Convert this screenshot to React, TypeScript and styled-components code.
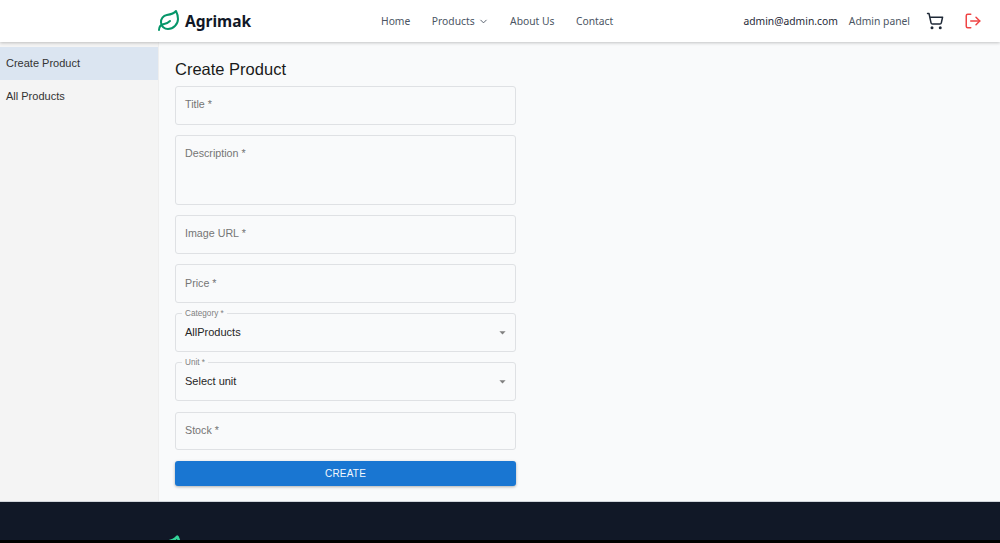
import React from "react";
import styled, { createGlobalStyle } from "styled-components";
import { ChevronDown, Leaf, LogOut, ShoppingCart } from "lucide-react";

const Global = createGlobalStyle`
  html, body {
    margin: 0;
    padding: 0;
    background: #000;
  }
  * {
    box-sizing: border-box;
  }
`;

const Page = styled.div`
  height: 543px;
  overflow: hidden;
  display: flex;
  flex-direction: column;
  background: #000;
  font-family: "Liberation Sans", Arial, sans-serif;
`;

const Header = styled.header`
  position: relative;
  z-index: 2;
  flex: none;
  height: 42px;
  background: #fff;
  box-shadow: 0 1px 3px rgba(0, 0, 0, 0.22);
  padding: 0 18px 0 157px;
  display: flex;
  align-items: center;
  font-family: "Noto Sans", "Open Sans", sans-serif;
  font-size: 10.3px;
`;

const Logo = styled.a`
  display: flex;
  align-items: center;
  gap: 4px;
  width: 224px;
  color: #111827;
  font-size: 15.5px;
  font-weight: 700;
`;

const Nav = styled.nav`
  display: flex;
  align-items: center;
  gap: 21.5px;
  color: #4b5563;
`;

const NavItem = styled.a`
  display: flex;
  align-items: center;
  gap: 3px;
`;

const Right = styled.div`
  margin-left: auto;
  display: flex;
  align-items: center;
`;

const Email = styled.span`
  color: #1f2937;
  margin-right: 11px;
`;

const PanelLink = styled.a`
  color: #4b5563;
  margin-right: 16px;
`;

const CartIcon = styled(ShoppingCart)`
  color: #1f2937;
  margin-right: 20px;
`;

const Body = styled.div`
  flex: none;
  height: 459.5px;
  display: flex;
  background: #f9fafb;
  border-bottom: 1px solid #d1d5db;
`;

const Sidebar = styled.aside`
  width: 159px;
  flex: none;
  background: #f4f4f4;
  padding-top: 5px;
  border-right: 1px solid #eeeeee;
  font-size: 11px;
`;

const SideItem = styled.a<{ $active?: boolean }>`
  display: flex;
  align-items: center;
  height: 33px;
  padding: 0 0 2px 6px;
  color: #333;
  background: ${({ $active }) => ($active ? "#dbe5f1" : "transparent")};
`;

const Content = styled.main`
  flex: 1;
  padding: 18px 0 0 16px;
`;

const Title = styled.h1`
  margin: 0 0 7px;
  font-size: 16.5px;
  line-height: 19px;
  font-weight: 400;
  color: #1a1a1a;
`;

const Form = styled.form`
  width: 341px;
  display: flex;
  flex-direction: column;
  gap: 10.5px;
`;

const Field = styled.div<{ $tall?: boolean }>`
  position: relative;
  height: ${({ $tall }) => ($tall ? "69.6px" : "38.6px")};
  padding: ${({ $tall }) => ($tall ? "11px 9px" : "0 9px 2px")};
  display: flex;
  align-items: ${({ $tall }) => ($tall ? "flex-start" : "center")};
  justify-content: space-between;
  border: 1px solid #dfe1e4;
  border-radius: 3px;
  font-size: 10.7px;
  color: #757575;
`;

const SmallLabel = styled.span`
  position: absolute;
  top: -5px;
  left: 6px;
  padding: 0 3px;
  background: #f9fafb;
  color: #808080;
  font-size: 8.2px;
  line-height: 9px;
`;

const Value = styled.span`
  color: #262626;
  font-size: 11px;
`;

const Arrow = styled.svg`
  width: 15px;
  height: 15px;
  margin: 2px -4px 0 0;
  fill: #808080;
`;

const Submit = styled.button`
  margin-top: 0.5px;
  height: 25px;
  border: 0;
  border-radius: 3px;
  background: #1976d2;
  color: #f3f7fc;
  font-family: "Liberation Sans", Arial, sans-serif;
  font-size: 10px;
  letter-spacing: 0.2px;
  box-shadow: 0 1px 3px rgba(0, 0, 0, 0.3);
`;

const Footer = styled.footer`
  flex: none;
  height: 38.5px;
  overflow: hidden;
  background: #111827;
  padding: 32px 0 0 152px;
`;

const FooterLeaf = styled(Leaf)`
  display: block;
  color: #34d399;
`;

const SelectField = ({ label, value }: { label: string; value: string }) => (
  <Field>
    <SmallLabel>{label}</SmallLabel>
    <Value>{value}</Value>
    <Arrow viewBox="0 0 24 24">
      <path d="M7 10l5 5 5-5z" />
    </Arrow>
  </Field>
);

export default function App() {
  return (
    <Page>
      <Global />
      <Header>
        <Logo>
          <Leaf size={24} color="#059669" strokeWidth={2} />
          Agrimak
        </Logo>
        <Nav>
          <NavItem>Home</NavItem>
          <NavItem>
            Products <ChevronDown size={11} />
          </NavItem>
          <NavItem>About Us</NavItem>
          <NavItem>Contact</NavItem>
        </Nav>
        <Right>
          <Email>admin@admin.com</Email>
          <PanelLink>Admin panel</PanelLink>
          <CartIcon size={18} />
          <LogOut size={18} color="#ef4444" />
        </Right>
      </Header>
      <Body>
        <Sidebar>
          <SideItem $active>Create Product</SideItem>
          <SideItem>All Products</SideItem>
        </Sidebar>
        <Content>
          <Title>Create Product</Title>
          <Form>
            <Field>Title *</Field>
            <Field $tall>Description *</Field>
            <Field>Image URL *</Field>
            <Field>Price *</Field>
            <SelectField label="Category *" value="AllProducts" />
            <SelectField label="Unit *" value="Select unit" />
            <Field>Stock *</Field>
            <Submit type="button">CREATE</Submit>
          </Form>
        </Content>
      </Body>
      <Footer>
        <FooterLeaf size={32} />
      </Footer>
    </Page>
  );
}
